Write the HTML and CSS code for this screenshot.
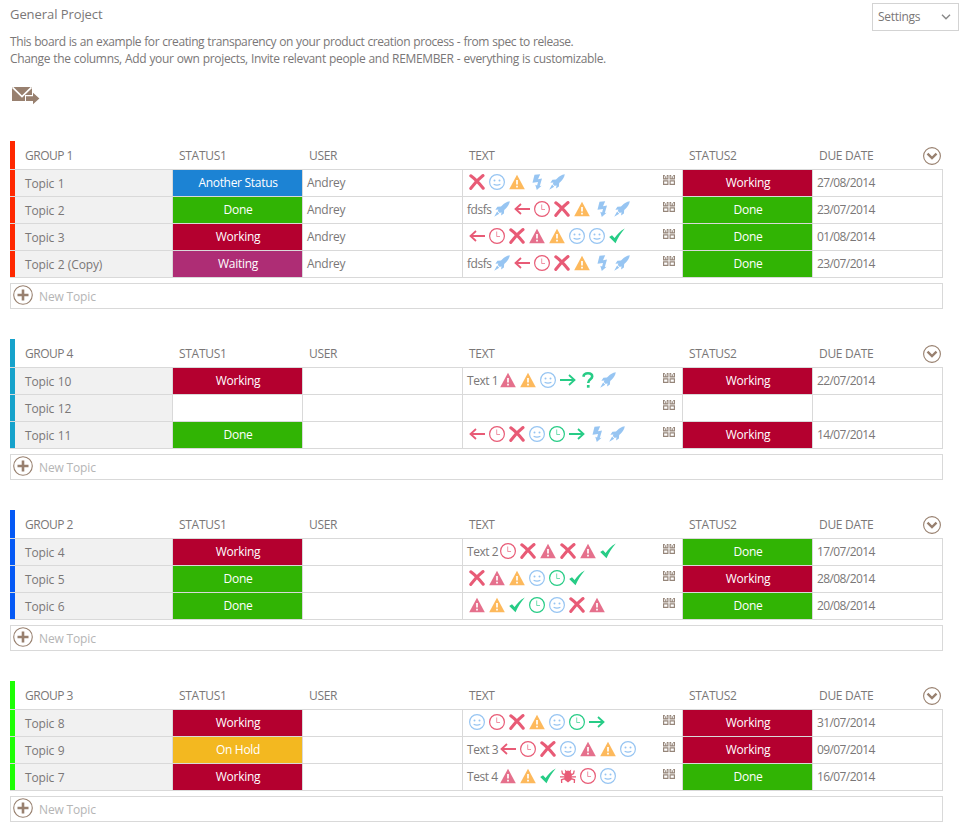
FILE: index.html
```html
<!DOCTYPE html>
<html lang="en">
<head>
<meta charset="utf-8">
<title>General Project</title>
<link rel="stylesheet" href="styles.css">
</head>
<body>
<svg class="sprite" aria-hidden="true">
  <symbol id="cross" viewBox="0 0 16 16"><path d="M1.8 1.8Q7.5 6 14.2 14.2M14 1.6Q7 7 1.8 14.4" fill="none" stroke="currentColor" stroke-width="3.1" stroke-linecap="round"/></symbol>
  <symbol id="smile" viewBox="0 0 16 16"><circle cx="8" cy="8" r="7.4" fill="none" stroke="currentColor" stroke-width="1.2"/><circle cx="5.5" cy="6.6" r="1" fill="currentColor"/><circle cx="10.5" cy="6.6" r="1" fill="currentColor"/><path d="M4.6 10.3Q8 12 11.4 10.3" fill="none" stroke="currentColor" stroke-width="1.1"/></symbol>
  <symbol id="warn" viewBox="0 0 16 16"><path d="M8 .8 15.8 15.2H.2Z" fill="currentColor"/><path d="M8 6v4.5M8 11.8v1.8" stroke="#fff" stroke-width="1.7"/></symbol>
  <symbol id="bolt" viewBox="0 0 16 16"><path d="M5.5.8 11.2.3 9 5.2 13 4.6 10.8 12 12.6 11.8 7.8 15.9 6.3 10.8 8.1 11.4 9 8 3.5 8.7Z" fill="currentColor"/></symbol>
  <symbol id="rocket" viewBox="0 0 16 16"><path d="M15.8.2C12.4.8 10.5 2 8.3 4.3L7 5.6 3.4 5.8 1.4 8.8 4.4 8.4 3.8 9.9 5.8 11.9 7.5 11.3 7.1 14.5 9.9 12.4 10.2 9 11.6 7.7C14 5.3 15.2 3.6 15.8.2ZM3.1 10.6.2 15.8 5.2 12.7Z" fill="currentColor"/></symbol>
  <symbol id="left" viewBox="0 0 16 16"><path d="M16 8H1.5M7 3 1.5 8 7 13" fill="none" stroke="currentColor" stroke-width="1.8"/></symbol>
  <symbol id="right" viewBox="0 0 16 16"><path d="M0 8H14.5M9 3 14.5 8 9 13" fill="none" stroke="currentColor" stroke-width="1.8"/></symbol>
  <symbol id="clock" viewBox="0 0 16 16"><circle cx="8" cy="8" r="7.4" fill="none" stroke="currentColor" stroke-width="1.2"/><path d="M7.7 3.5V8.5H11" fill="none" stroke="currentColor" stroke-width="1" opacity=".65"/></symbol>
  <symbol id="check" viewBox="0 0 16 16"><path d="M.2 9 3 7.2 5.6 10.1C8 6.5 11 3 15.8.5 11.8 5 9 9.5 6.5 15.2Z" fill="currentColor"/></symbol>
  <symbol id="question" viewBox="0 0 16 16"><path d="M3.4 4.7C3.8 1.8 6 1.3 8 1.3 10.8 1.3 12.2 2.7 12.2 4.6 12.2 7.4 8.2 7.4 8.2 11" fill="none" stroke="currentColor" stroke-width="2.6"/><path d="M6.9 13h2.7v2.7H6.9z" fill="currentColor"/></symbol>
  <symbol id="bug" viewBox="0 0 16 16"><path d="M5.3 4.2 4.8 1.5 6.6 3 8 2.6 9.4 3 11.2 1.5 10.7 4.2 11.8 6V11.5L8 14.6 4.2 11.5V6Z" fill="currentColor"/><path d="M4.7 6.8 2.4 5.6 1.8 2.5M4.5 8.8H0M4.7 10.7 1.5 11.8 1.7 15M11.3 6.8 13.6 5.6 14.2 2.5M11.5 8.8H16M11.3 10.7 14.5 11.8 14.3 15" fill="none" stroke="currentColor" stroke-width="1.3"/></symbol>
  <symbol id="blocks" viewBox="0 0 12 10"><path d="M.6 0V3.9H4.9V0M2.8 1.2V3.4M7.1 0V3.9H11.4V0M9.2 1.2V3.4M0 .6H1.8M3.8 .6H5.4M6.6 .6H8.2M10.2 .6H12M.6 5.8H4.9V9.4H.6ZM7.1 5.8H11.4V9.4H7.1Z" fill="none" stroke="currentColor" stroke-width="1.15"/></symbol>
  <symbol id="plus" viewBox="0 0 20 20"><circle cx="10" cy="10" r="9.3" fill="none" stroke="currentColor" stroke-width="1.1"/><path d="M10 4.5v11M4.5 10h11" stroke="currentColor" stroke-width="2.6"/></symbol>
  <symbol id="expand" viewBox="0 0 18 18"><circle cx="9" cy="9" r="8.4" fill="none" stroke="currentColor" stroke-width="1.1"/><path d="M4.5 6.6 9 11 13.5 6.6" fill="none" stroke="currentColor" stroke-width="2.4"/></symbol>
</svg>
<header class="top">
  <div class="intro">
    <h1 class="title">General Project</h1>
    <p class="desc"><span class="line-a">This board is an example for creating transparency on your product creation process - from spec to release.</span><br><span class="line-b">Change the columns, Add your own projects, Invite relevant people and REMEMBER - everything is customizable.</span></p>
    <svg class="mail" viewBox="0 0 28 18"><path d="M0 0H20V8H13V14H0Z" fill="#98806f"/><path d="M.5.3 10 9.5 19.5.3" fill="none" stroke="#fff" stroke-width="1.7"/><path d="M14 9.2H21V5.8L27.4 11.5 21 17.2V14H14Z" fill="#98806f"/></svg>
  </div>
  <button class="settings"><span>Settings</span><svg class="chev" viewBox="0 0 10 6"><path d="M1 .8 5 4.8 9 .8" fill="none" stroke="#888" stroke-width="1.4"/></svg></button>
</header>
<main id="board" class="board"></main>
<script src="board.js"></script>
</body>
</html>
```
FILE: styles.css
```css
* { box-sizing: border-box; }
body { margin: 0; background: #fff; color: #7a7777; font: 12px/16px "Open Sans", "Noto Sans", sans-serif; letter-spacing: -0.3px; }
.sprite { position: absolute; width: 0; height: 0; }
.top { display: flex; justify-content: space-between; height: 141px; padding: 3px 5px 0 10px; }
.title { margin: 2px 0 0; font-size: 13px; line-height: 18px; font-weight: 400; letter-spacing: -0.07px; }
.desc { margin: 10px 0 0; line-height: 17px; white-space: nowrap; word-spacing: 0.4px; }
.line-a { letter-spacing: -0.41px; }
.line-b { letter-spacing: -0.34px; }
.mail { display: block; width: 28px; height: 18px; margin: 20px 0 0 2px; }
.settings { display: flex; align-items: center; justify-content: space-between; width: 87px; height: 28px; padding: 0 7px 1px 5px; border: 1px solid #d3d3d3; background: #fff; color: inherit; font: inherit; letter-spacing: inherit; }
.chev { width: 10px; height: 6px; }
.board { width: 933px; margin-left: 10px; }
.group { margin-bottom: 30px; }
.row { display: grid; grid-template-columns: 5px 158px 130px 160px 220px 130px 130px; height: 27px; border-bottom: 1px solid #d9d9d9; }
.row.head { height: 29px; }
.head .cell { padding: 7px 0 0 6px; }
.head .name { padding-left: 10px; letter-spacing: -0.5px; }
.head .last { display: flex; justify-content: space-between; padding-top: 6px; }
.last span { padding-top: 1px; }
.row:not(.head) .cell { border-right: 1px solid #d9d9d9; padding: 5px 4px 0; }
.row:not(.head) .name { background: #f1f1f1; padding: 6px 0 0 10px; letter-spacing: -0.15px; word-spacing: 0.5px; }
.row:not(.head) .status { text-align: center; color: #fff; padding: 5px 3px 0 4px; }
.row:not(.head) .date { letter-spacing: -0.6px; }
.red { background: #ff2800; }
.cyan { background: #16a2cb; }
.blue { background: #0559f5; }
.lime { background: #1eff05; }
.another { background: #1c83d4; }
.done { background: #31b404; }
.working { background: #b4002f; }
.waiting { background: #ae2d75; }
.hold { background: #f3b820; }
.row:not(.head) .text { display: flex; padding: 0 7px 0 4px; }
.label { padding-top: 5px; white-space: nowrap; letter-spacing: -0.45px; }
.label.short { width: 25px; }
.label.long { width: 31px; }
.icon { width: 16px; height: 16px; margin: 4px 2px 0; }
.pink { color: #e85b76; }
.rose { color: #e5708c; }
.orange { color: #fdb95c; }
.sky { color: #97c5f2; }
.green { color: #27cc86; }
.blocks { width: 12px; height: 10px; margin: 5px 0 0 auto; color: #958579; }
.expand { width: 18px; height: 18px; margin-right: 2px; color: #98806f; }
.new { display: flex; height: 26px; margin-top: 5px; padding: 1px 2px 0; border: 1px solid #d9d9d9; color: #b5b5b5; letter-spacing: -0.15px; }
.plus { width: 20px; height: 20px; color: #98806f; }
.new-label { margin: 4px 0 0 6px; }
```
FILE: board.js
```js
const statuses = { A: ["another", "Another Status"], D: ["done", "Done"], W: ["working", "Working"], P: ["waiting", "Waiting"], H: ["hold", "On Hold"], "": ["", ""] };
const icons = {
  x: ["cross", "pink"], s: ["smile", "sky"], o: ["warn", "orange"], r: ["warn", "rose"], z: ["bolt", "sky"], k: ["rocket", "sky"],
  l: ["left", "pink"], c: ["clock", "pink"], g: ["clock", "green"], v: ["check", "green"], n: ["right", "green"], q: ["question", "green"], b: ["bug", "pink"]
};
const groups = [
  ["GROUP 1", "red", [
    ["Topic 1", "A", "Andrey", "", "xsozk", "W", "27/08/2014"],
    ["Topic 2", "D", "Andrey", "fdsfs", "klcxozk", "D", "23/07/2014"],
    ["Topic 3", "W", "Andrey", "", "lcxrossv", "D", "01/08/2014"],
    ["Topic 2 (Copy)", "P", "Andrey", "fdsfs", "klcxozk", "D", "23/07/2014"]]],
  ["GROUP 4", "cyan", [
    ["Topic 10", "W", "", "Text 1", "rosnqk", "W", "22/07/2014"],
    ["Topic 12", "", "", "", "", "", ""],
    ["Topic 11", "D", "", "", "lcxsgnzk", "W", "14/07/2014"]]],
  ["GROUP 2", "blue", [
    ["Topic 4", "W", "", "Text 2", "cxrxrv", "D", "17/07/2014"],
    ["Topic 5", "D", "", "", "xrosgv", "W", "28/08/2014"],
    ["Topic 6", "D", "", "", "rovgsxr", "D", "20/08/2014"]]],
  ["GROUP 3", "lime", [
    ["Topic 8", "W", "", "", "scxosgn", "W", "31/07/2014"],
    ["Topic 9", "H", "", "Text 3", "lcxsros", "W", "09/07/2014"],
    ["Topic 7", "W", "", "Test 4", "rovbcs", "D", "16/07/2014"]]]
];
const svg = (id, cls) => `<svg class="${cls}"><use href="#${id}"/></svg>`;
const status = key => `<div class="cell status ${statuses[key][0]}">${statuses[key][1]}</div>`;
const label = text => text ? `<span class="label ${text.length > 5 ? "long" : "short"}">${text}</span>` : "";
const row = (color, [name, s1, user, text, marks, s2, due]) => `<div class="row"><i class="${color}"></i><div class="cell name">${name}</div>${status(s1)}<div class="cell">${user}</div><div class="cell text">${label(text)}${[...marks].map(m => svg(icons[m][0], "icon " + icons[m][1])).join("")}${svg("blocks", "blocks")}</div>${status(s2)}<div class="cell date">${due}</div></div>`;
document.getElementById("board").innerHTML = groups.map(([name, color, rows]) => `<section class="group"><div class="row head"><i class="${color}"></i><div class="cell name">${name}</div><div class="cell">STATUS1</div><div class="cell">USER</div><div class="cell">TEXT</div><div class="cell">STATUS2</div><div class="cell last"><span>DUE DATE</span>${svg("expand", "expand")}</div></div>${rows.map(r => row(color, r)).join("")}<div class="new">${svg("plus", "plus")}<span class="new-label">New Topic</span></div></section>`).join("");
```
